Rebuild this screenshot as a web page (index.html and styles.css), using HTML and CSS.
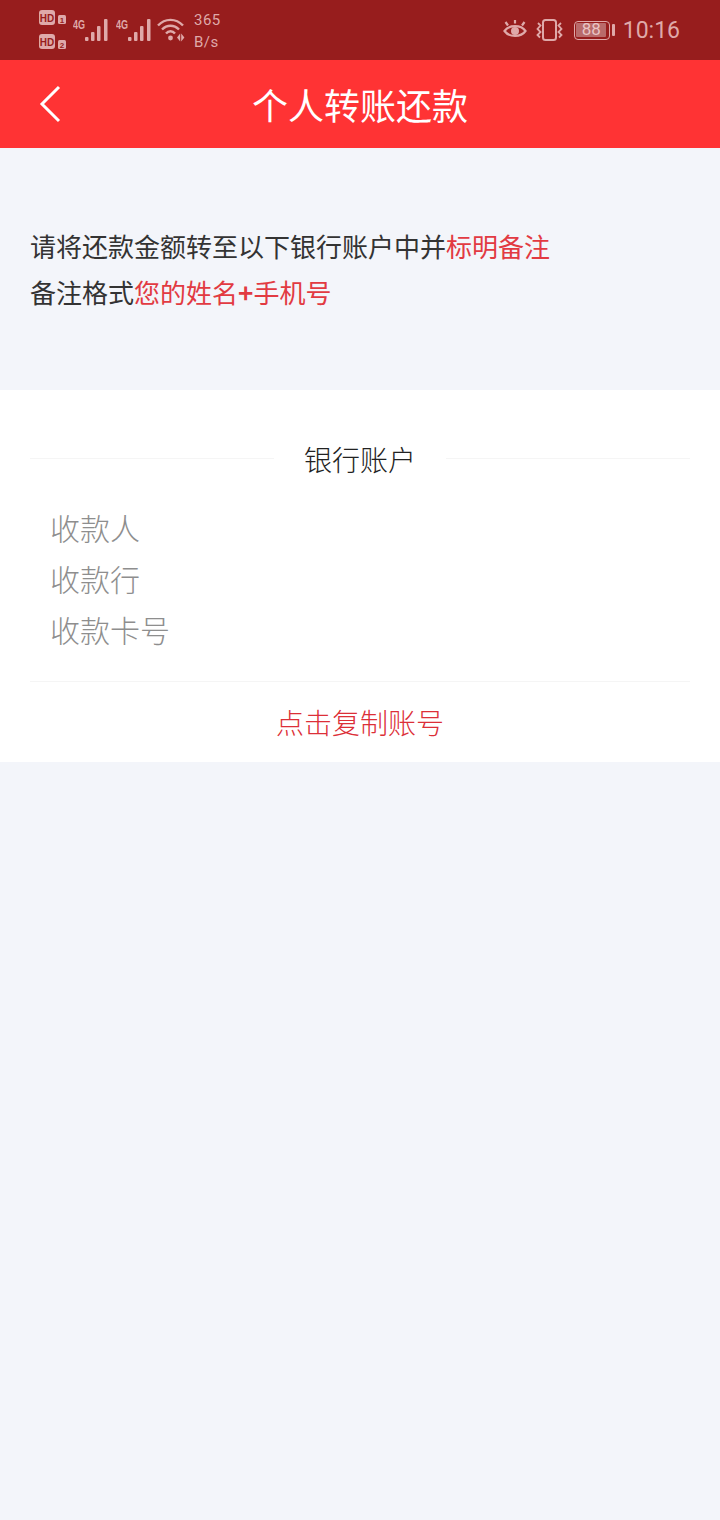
FILE: index.html
```html
<!DOCTYPE html>
<html lang="zh">
<head>
  <meta charset="UTF-8">
  <title>个人转账还款</title>
  <link rel="stylesheet" href="styles.css">
</head>
<body>
  <div class="status-bar">
    <div class="status-left">
      <div class="hd-col">
        <svg width="28" height="16" viewBox="0 0 28 16"><rect x="0" y="0" width="16" height="15" rx="3" fill="#dfa9a9"/><text x="8" y="11.500" class="hd-text" text-anchor="middle">HD</text><rect x="19" y="5" width="8" height="9" rx="1.500" fill="#dfa9a9"/><text x="23" y="12.500" class="hd-num" text-anchor="middle">1</text></svg>
        <svg width="28" height="16" viewBox="0 0 28 16"><rect x="0" y="0" width="16" height="15" rx="3" fill="#dfa9a9"/><text x="8" y="11.500" class="hd-text" text-anchor="middle">HD</text><rect x="19" y="6" width="8" height="9" rx="1.500" fill="#dfa9a9"/><text x="23" y="13.500" class="hd-num" text-anchor="middle">2</text></svg>
      </div>
      <svg class="signal" width="37" height="26" viewBox="0 0 37 26">
        <text x="0" y="12" class="net-text" textLength="12" lengthAdjust="spacingAndGlyphs">4G</text>
        <g fill="#dfa9a9"><rect x="12" y="20" width="3.500" height="4" rx="1"/><rect x="18" y="15" width="3.500" height="9" rx="1"/><rect x="24" y="9" width="3.500" height="15" rx="1"/><rect x="31" y="2" width="3.500" height="22" rx="1"/></g>
      </svg>
      <svg class="signal" width="37" height="26" viewBox="0 0 37 26">
        <text x="0" y="12" class="net-text" textLength="12" lengthAdjust="spacingAndGlyphs">4G</text>
        <g fill="#dfa9a9"><rect x="12" y="20" width="3.500" height="4" rx="1"/><rect x="18" y="15" width="3.500" height="9" rx="1"/><rect x="24" y="9" width="3.500" height="15" rx="1"/><rect x="31" y="2" width="3.500" height="22" rx="1"/></g>
      </svg>
      <svg class="wifi" width="30" height="26" viewBox="0 0 30 26" fill="none" stroke="#dfa9a9" stroke-width="2.400">
        <path d="M1 8.500C8 1 19 1 26 8.500"/>
        <path d="M5 12.500C10 7.500 17 7.500 22 12.500"/>
        <path d="M9 16.500C11.500 13.500 15.500 13.500 18 16.500"/>
        <circle cx="13.500" cy="21" r="2.400" fill="#dfa9a9" stroke="none"/>
        <path d="M20 20.500l3.200-4v8z M24.200 16.500v8l3.200-4z" fill="#dfa9a9" stroke="none"/>
      </svg>
      <div class="speed"><span>365</span><span>B/s</span></div>
    </div>
    <div class="status-right">
      <svg width="24" height="22" viewBox="0 0 24 22" fill="none" stroke="#dfa9a9" stroke-width="2.200">
        <path d="M1.500 12C6 5.500 18 5.500 22.500 12C18 18.500 6 18.500 1.500 12Z"/>
        <circle cx="12" cy="12" r="4" fill="#dfa9a9" stroke="none"/>
        <path d="M5 6.500L2.500 3M12 4.500V1M19 6.500L21.500 3"/>
      </svg>
      <svg width="29" height="24" viewBox="0 0 29 24" fill="none" stroke="#dfa9a9" stroke-width="2">
        <rect x="8" y="2" width="13" height="20" rx="2.500"/>
        <path d="M3 5l2.500 2.500L2.500 11l3 3L2.500 17l2.500 2.500M26 5l-2.500 2.500L26.500 11l-3 3L26.500 17l-2.500 2.500" stroke-width="1.800"/>
      </svg>
      <div class="battery">
        <div class="battery-body"><div class="battery-fill">88</div></div>
        <div class="battery-tip"></div>
      </div>
      <span class="clock">10:16</span>
    </div>
  </div>

  <header class="nav-bar">
    <svg class="back" width="24" height="38" viewBox="0 0 24 38" fill="none" stroke="#fff" stroke-width="3">
      <path d="M20 2L3 19L20 36"/>
    </svg>
    <h1>个人转账还款</h1>
  </header>

  <section class="notice">
    <p>请将还款金额转至以下银行账户中并<span class="red">标明备注</span></p>
    <p>备注格式<span class="red">您的姓名<b class="plus">+</b>手机号</span></p>
  </section>

  <section class="account">
    <div class="account-title">
      <span class="line"></span>
      <span class="title-text">银行账户</span>
      <span class="line"></span>
    </div>
    <div class="rows">
      <div class="row">收款人</div>
      <div class="row">收款行</div>
      <div class="row">收款卡号</div>
    </div>
    <div class="copy">点击复制账号</div>
  </section>
</body>
</html>
```

FILE: styles.css
```css
body {
  margin: 0;
  height: 1520px;
  overflow: hidden;
  background-color: #f3f5fa;
  font-family: "Noto Sans CJK SC", Roboto, sans-serif;
  color: #333;
}

p,
h1 {
  margin: 0;
  font-weight: normal;
}

.status-bar {
  height: 60px;
  background-color: #971d1d;
  display: flex;
  justify-content: space-between;
  align-items: center;
  padding: 0 40px 0 39px;
  color: #dfa9a9;
  font-family: Roboto, sans-serif;
}

.status-left {
  display: flex;
  align-items: center;
}

.status-right {
  display: flex;
  align-items: center;
  gap: 8px;
}

.hd-col {
  display: flex;
  flex-direction: column;
  gap: 8px;
  width: 34px;
}

.hd-col svg {
  display: block;
}

.hd-text {
  font-family: "Liberation Sans", sans-serif;
  font-size: 10px;
  font-weight: bold;
  fill: #971d1d;
}

.hd-num {
  font-family: "Liberation Sans", sans-serif;
  font-size: 8px;
  font-weight: bold;
  fill: #971d1d;
}

.net-text {
  font-family: "Liberation Sans", sans-serif;
  font-size: 13px;
  font-weight: bold;
  fill: #dfa9a9;
}

.signal {
  margin-right: 6px;
}

.wifi {
  margin-left: -2px;
}

.speed {
  display: flex;
  flex-direction: column;
  margin-left: 7px;
  padding-top: 2px;
  font-size: 15px;
  line-height: 22px;
  letter-spacing: 0.5px;
}

.battery {
  display: flex;
  align-items: center;
  gap: 2px;
  margin-left: 2px;
}

.battery-body {
  width: 36px;
  height: 19px;
  box-sizing: border-box;
  border: 1.500px solid #dfa9a9;
  border-radius: 4px;
  padding: 1.500px;
}

.battery-fill {
  width: 30px;
  height: 100%;
  background-color: #b96a6a;
  border-radius: 1px;
  color: #e9c4c4;
  font-size: 17px;
  line-height: 13px;
  text-align: center;
}

.battery-tip {
  width: 3px;
  height: 12px;
  background-color: #dfa9a9;
  border-radius: 1px;
}

.clock {
  font-size: 23px;
}

.nav-bar {
  height: 88px;
  background-color: #ff3334;
  display: flex;
  align-items: center;
  justify-content: center;
  position: relative;
}

.back {
  position: absolute;
  left: 39px;
  top: 25px;
}

.nav-bar h1 {
  font-size: 36px;
  color: #fff;
}

.notice {
  height: 242px;
  box-sizing: border-box;
  padding-top: 75px;
  padding-left: 30px;
  font-size: 26px;
  line-height: 46px;
}

.red {
  color: #e23a42;
}

.plus {
  font-weight: bold;
}

.account {
  height: 372px;
  background-color: #fff;
  box-sizing: border-box;
  padding: 46px 30px 0;
}

.account-title {
  display: flex;
  align-items: center;
  height: 46px;
}

.line {
  flex: 1;
  height: 1px;
  margin-bottom: 2px;
  background-color: #f5f5f5;
}

.title-text {
  font-size: 28px;
  font-weight: 300;
  color: #222;
  padding: 0 30px;
}

.rows {
  padding: 20px 0 26px 20px;
  border-bottom: 1px solid #f5f5f5;
}

.row {
  font-size: 30px;
  font-weight: 300;
  line-height: 51px;
  color: #8e8e8e;
}

.copy {
  font-size: 28px;
  font-weight: 300;
  line-height: 80px;
  text-align: center;
  color: #dc2f38;
}
```
